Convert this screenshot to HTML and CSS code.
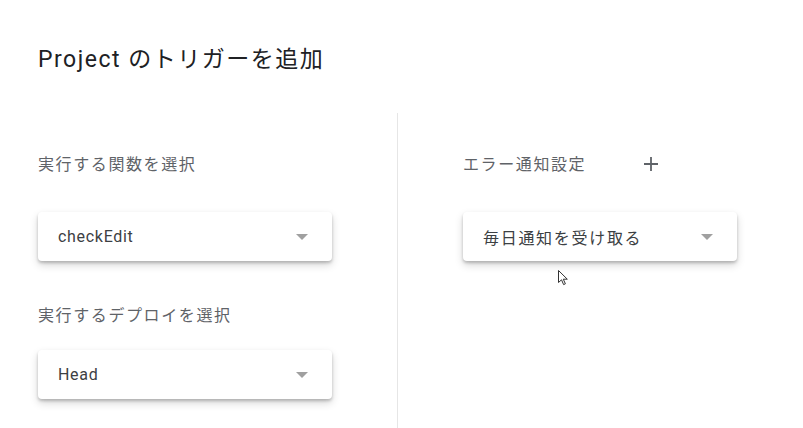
FILE: index.html
```html
<!DOCTYPE html>
<html lang="ja">
<head>
<meta charset="utf-8">
<title>Project のトリガーを追加</title>
<link rel="stylesheet" href="styles.css">
</head>
<body>
<div class="page">
  <h1 class="title">Project のトリガーを追加</h1>
  <div class="content">
    <div class="col col-left">
      <div class="label label-first">実行する関数を選択</div>
      <div class="select">
        <span class="select-text">checkEdit</span>
        <span class="arrow"></span>
      </div>
      <div class="label label-second">実行するデプロイを選択</div>
      <div class="select select-second">
        <span class="select-text">Head</span>
        <span class="arrow"></span>
      </div>
    </div>
    <div class="divider"></div>
    <div class="col col-right">
      <div class="label-row">
        <div class="label">エラー通知設定</div>
        <svg class="plus" width="16" height="16" viewBox="0 0 16 16" aria-hidden="true">
          <path d="M8 1v14M1 8h14" stroke="#5f6368" stroke-width="1.8" fill="none"/>
        </svg>
      </div>
      <div class="select select-narrow">
        <span class="select-text select-text-ja">毎日通知を受け取る</span>
        <span class="arrow"></span>
      </div>
    </div>
  </div>
  <svg class="cursor" width="11" height="16" viewBox="0 0 11 16" aria-hidden="true">
    <path d="M0.5 0.5 L0.5 12.5 L3.5 9.8 L5.6 14.6 L7.4 13.8 L5.3 9.2 L9.3 9.2 Z" fill="#fff" stroke="#333" stroke-width="1"/>
  </svg>
</div>
</body>
</html>
```

FILE: styles.css
```css
* { box-sizing: border-box; }
html, body {
  margin: 0;
  padding: 0;
  background: #ffffff;
}
body {
  font-family: Roboto, "Noto Sans CJK JP", sans-serif;
  color: #3c4043;
}
.page {
  position: relative;
  width: 803px;
  height: 428px;
  overflow: hidden;
  padding-left: 38px;
}
.title {
  margin: 0;
  padding-top: 44px;
  font-size: 23px;
  line-height: 32px;
  font-weight: 400;
  color: #202124;
  letter-spacing: 1.5px;
}
.content {
  display: flex;
  margin-top: 37px;
  height: 315px;
}
.col-left {
  width: 294px;
  padding-top: 40px;
}
.col-right {
  width: 274px;
  padding-top: 40px;
}
.divider {
  width: 1px;
  background: #e6e6e6;
  margin: 0 65px;
}
.label {
  font-size: 16px;
  line-height: 24px;
  color: #5f6368;
  letter-spacing: 1.6px;
}
.label-second {
  margin-top: 43px;
}
.label-row {
  display: flex;
  align-items: center;
}
.plus {
  margin-left: 57px;
  margin-top: -2px;
}
.select {
  margin-top: 35px;
  height: 49px;
  width: 100%;
  border-radius: 4px;
  background: #fff;
  box-shadow: 0 2px 3px rgba(0, 0, 0, 0.2), 0 4px 9px rgba(0, 0, 0, 0.16);
  display: flex;
  align-items: center;
  justify-content: space-between;
  padding: 0 24px 0 20px;
}
.select-second {
  margin-top: 22px;
}
.select-text {
  font-size: 16px;
  letter-spacing: 0.7px;
  color: #3c4043;
}
.select-text-ja {
  letter-spacing: 1.7px;
}
.arrow {
  width: 0;
  height: 0;
  border-left: 6px solid transparent;
  border-right: 6px solid transparent;
  border-top: 6px solid #a0a0a0;
}
.cursor {
  position: absolute;
  left: 558px;
  top: 270px;
}
```
